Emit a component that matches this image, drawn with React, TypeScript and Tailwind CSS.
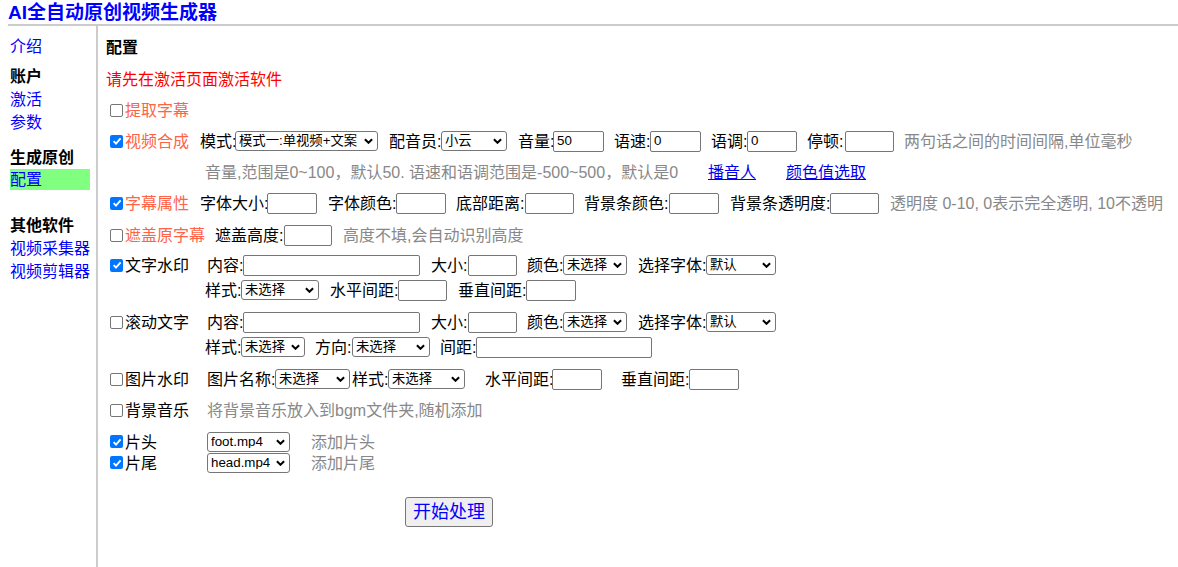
import React from "react";

function Check({ on }: { on?: boolean }) {
  return on ? (
    <span className="ml-[4px] flex h-[13px] w-[13px] shrink-0 items-center justify-center rounded-[2px] bg-[#0075ff]">
      <svg viewBox="0 0 10 10" className="h-[10px] w-[10px]">
        <path d="M1.6 5.2 L4 7.6 L8.6 2.4" stroke="white" strokeWidth="1.9" fill="none" />
      </svg>
    </span>
  ) : (
    <span className="ml-[4px] h-[13px] w-[13px] shrink-0 rounded-[2px] border border-[#767676] bg-white" />
  );
}

function Lbl({ className, children }: { className: string; children: React.ReactNode }) {
  return <span className={"shrink-0 whitespace-nowrap pt-[2px] text-[16px] " + className}>{children}</span>;
}

function Gray({ className, children }: { className: string; children: React.ReactNode }) {
  return <span className={"shrink-0 whitespace-nowrap pt-[2px] text-[16px] text-[#888888] " + className}>{children}</span>;
}

function Inp({ className, value }: { className: string; value?: string }) {
  return (
    <span className={"flex h-[21px] shrink-0 items-center rounded-[2px] border border-[#767676] bg-white pl-[3px] text-[13.33px] leading-none text-black " + className}>
      {value}
    </span>
  );
}

function Sel({ className, children }: { className: string; children: React.ReactNode }) {
  return (
    <span className={"flex h-[20px] shrink-0 items-center justify-between rounded-[3px] border border-[#767676] bg-white pl-[3px] pr-[4px] text-[13.33px] leading-none text-black " + className}>
      <span className="overflow-hidden whitespace-nowrap">{children}</span>
      <svg viewBox="0 0 10 6" className="ml-[2px] h-[6px] w-[9px] shrink-0">
        <path d="M1 1 L5 5 L9 1" stroke="black" strokeWidth="2.2" fill="none" />
      </svg>
    </span>
  );
}

export default function App() {
  return (
    <div className="h-[567px] w-[1178px] overflow-hidden bg-white font-['Liberation_Sans','Noto_Sans_CJK_SC',sans-serif] text-black">
      {/* header */}
      <div className="ml-[8px] h-[26px] border-b-2 border-[#cccccc]">
        <div className="h-[24px] text-[19px] font-bold leading-[26px] text-[#0000ff]">AI全自动原创视频生成器</div>
      </div>

      <div className="flex h-[541px]">
        {/* sidebar */}
        <div className="w-[98px] shrink-0 border-r-2 border-[#cccccc] pl-[10px] text-[16px] leading-[23px]">
          <div className="mt-[9px] h-[23px] text-[#0000ff]">介绍</div>
          <div className="mt-[7px] h-[23px] font-bold">账户</div>
          <div className="h-[23px] text-[#0000ff]">激活</div>
          <div className="h-[23px] text-[#0000ff]">参数</div>
          <div className="mt-[12px] h-[23px] font-bold">生成原创</div>
          <div className="h-[21px] w-[80px] bg-[#80ff80] leading-[21px] text-[#0000ff]">配置</div>
          <div className="mt-[24px] h-[23px] font-bold">其他软件</div>
          <div className="h-[23px] text-[#0000ff]">视频采集器</div>
          <div className="h-[23px] text-[#0000ff]">视频剪辑器</div>
        </div>

        {/* main */}
        <div className="flex-1 pl-[8px] leading-[22px]">
          <div className="mt-[11px] h-[22px] text-[16px] font-bold">配置</div>
          <div className="mt-[10px] h-[22px] text-[16px] text-[#ff0000]">请先在激活页面激活软件</div>

          {/* 提取字幕 */}
          <div className="mt-[8px] flex h-[22px] items-center">
            <Check />
            <Lbl className="ml-[2px] w-[64px] text-[#ff6347]">提取字幕</Lbl>
          </div>

          {/* 视频合成 */}
          <div className="mt-[9px] flex h-[22px] items-center">
            <Check on />
            <Lbl className="ml-[2px] w-[64px] text-[#ff6347]">视频合成</Lbl>
            <Lbl className="ml-[11px] w-[35px]">模式:</Lbl>
            <Sel className="w-[143px]">模式一:单视频+文案</Sel>
            <Lbl className="ml-[11px] w-[52px]">配音员:</Lbl>
            <Sel className="w-[66px]">小云</Sel>
            <Lbl className="ml-[11px] w-[35px]">音量:</Lbl>
            <Inp className="w-[51px]" value="50" />
            <Lbl className="ml-[10px] w-[36px]">语速:</Lbl>
            <Inp className="w-[51px]" value="0" />
            <Lbl className="ml-[10px] w-[36px]">语调:</Lbl>
            <Inp className="w-[50px]" value="0" />
            <Lbl className="ml-[10px] w-[38px]">停顿:</Lbl>
            <Inp className="w-[49px]" />
            <Gray className="ml-[10px]">两句话之间的时间间隔,单位毫秒</Gray>
          </div>
          <div className="mt-[9px] flex h-[22px] items-center">
            <Gray className="ml-[99px] w-[473px]">音量,范围是0~100，默认50. 语速和语调范围是-500~500，默认是0</Gray>
            <a className="ml-[30px] w-[48px] shrink-0 pt-[2px] text-[16px] text-[#0000ee] underline">播音人</a>
            <a className="ml-[30px] shrink-0 pt-[2px] text-[16px] text-[#0000ee] underline">颜色值选取</a>
          </div>

          {/* 字幕属性 */}
          <div className="mt-[9px] flex h-[22px] items-center">
            <Check on />
            <Lbl className="ml-[2px] w-[64px] text-[#ff6347]">字幕属性</Lbl>
            <Lbl className="ml-[11px] w-[67px]">字体大小:</Lbl>
            <Inp className="w-[50px]" />
            <Lbl className="ml-[11px] w-[68px]">字体颜色:</Lbl>
            <Inp className="w-[50px]" />
            <Lbl className="ml-[10px] w-[69px]">底部距离:</Lbl>
            <Inp className="w-[49px]" />
            <Lbl className="ml-[10px] w-[85px]">背景条颜色:</Lbl>
            <Inp className="w-[50px]" />
            <Lbl className="ml-[11px] w-[100px]">背景条透明度:</Lbl>
            <Inp className="w-[49px]" />
            <Gray className="ml-[11px]">透明度 0-10, 0表示完全透明, 10不透明</Gray>
          </div>

          {/* 遮盖原字幕 */}
          <div className="mt-[10px] flex h-[22px] items-center">
            <Check />
            <Lbl className="ml-[2px] w-[80px] text-[#ff6347]">遮盖原字幕</Lbl>
            <Lbl className="ml-[10px] w-[69px]">遮盖高度:</Lbl>
            <Inp className="w-[48px]" />
            <Gray className="ml-[11px]">高度不填,会自动识别高度</Gray>
          </div>

          {/* 文字水印 */}
          <div className="mt-[8px] flex h-[22px] items-center">
            <Check on />
            <Lbl className="ml-[2px] w-[64px]">文字水印</Lbl>
            <Lbl className="ml-[18px] w-[36px]">内容:</Lbl>
            <Inp className="w-[177px]" />
            <Lbl className="ml-[11px] w-[37px]">大小:</Lbl>
            <Inp className="w-[49px]" />
            <Lbl className="ml-[10px] w-[36px]">颜色:</Lbl>
            <Sel className="w-[64px]">未选择</Sel>
            <Lbl className="ml-[11px] w-[68px]">选择字体:</Lbl>
            <Sel className="w-[70px]">默认</Sel>
          </div>
          <div className="mt-[3px] flex h-[22px] items-center">
            <Lbl className="ml-[99px] w-[36px]">样式:</Lbl>
            <Sel className="w-[78px]">未选择</Sel>
            <Lbl className="ml-[11px] w-[68px]">水平间距:</Lbl>
            <Inp className="w-[49px]" />
            <Lbl className="ml-[11px] w-[68px]">垂直间距:</Lbl>
            <Inp className="w-[50px]" />
          </div>

          {/* 滚动文字 */}
          <div className="mt-[10px] flex h-[22px] items-center">
            <Check />
            <Lbl className="ml-[2px] w-[64px]">滚动文字</Lbl>
            <Lbl className="ml-[18px] w-[36px]">内容:</Lbl>
            <Inp className="w-[177px]" />
            <Lbl className="ml-[11px] w-[37px]">大小:</Lbl>
            <Inp className="w-[49px]" />
            <Lbl className="ml-[10px] w-[36px]">颜色:</Lbl>
            <Sel className="w-[64px]">未选择</Sel>
            <Lbl className="ml-[11px] w-[68px]">选择字体:</Lbl>
            <Sel className="w-[70px]">默认</Sel>
          </div>
          <div className="mt-[3px] flex h-[22px] items-center">
            <Lbl className="ml-[99px] w-[36px]">样式:</Lbl>
            <Sel className="w-[64px]">未选择</Sel>
            <Lbl className="ml-[10px] w-[37px]">方向:</Lbl>
            <Sel className="w-[78px]">未选择</Sel>
            <Lbl className="ml-[10px] w-[36px]">间距:</Lbl>
            <Inp className="w-[176px]" />
          </div>

          {/* 图片水印 */}
          <div className="mt-[10px] flex h-[22px] items-center">
            <Check />
            <Lbl className="ml-[2px] w-[64px]">图片水印</Lbl>
            <Lbl className="ml-[18px] w-[68px]">图片名称:</Lbl>
            <Sel className="w-[75px]">未选择</Sel>
            <Lbl className="ml-[2px] w-[36px]">样式:</Lbl>
            <Sel className="w-[77px]">未选择</Sel>
            <Lbl className="ml-[20px] w-[67px]">水平间距:</Lbl>
            <Inp className="w-[50px]" />
            <Lbl className="ml-[19px] w-[68px]">垂直间距:</Lbl>
            <Inp className="w-[50px]" />
          </div>

          {/* 背景音乐 */}
          <div className="mt-[9px] flex h-[22px] items-center">
            <Check />
            <Lbl className="ml-[2px] w-[64px]">背景音乐</Lbl>
            <Gray className="ml-[18px]">将背景音乐放入到bgm文件夹,随机添加</Gray>
          </div>

          {/* 片头 / 片尾 */}
          <div className="mt-[10px] flex h-[21px] items-center">
            <Check on />
            <Lbl className="ml-[2px] w-[32px]">片头</Lbl>
            <Sel className="ml-[50px] w-[83px]">foot.mp4</Sel>
            <Gray className="ml-[21px]">添加片头</Gray>
          </div>
          <div className="flex h-[21px] items-center">
            <Check on />
            <Lbl className="ml-[2px] w-[32px]">片尾</Lbl>
            <Sel className="ml-[50px] w-[83px]">head.mp4</Sel>
            <Gray className="ml-[21px]">添加片尾</Gray>
          </div>

          <button className="ml-[299px] mt-[24px] flex h-[30px] w-[88px] items-center justify-center rounded-[3px] border border-[#767676] bg-[#efefef] text-[18px] text-[#0000ff]">
            开始处理
          </button>
        </div>
      </div>
    </div>
  );
}
